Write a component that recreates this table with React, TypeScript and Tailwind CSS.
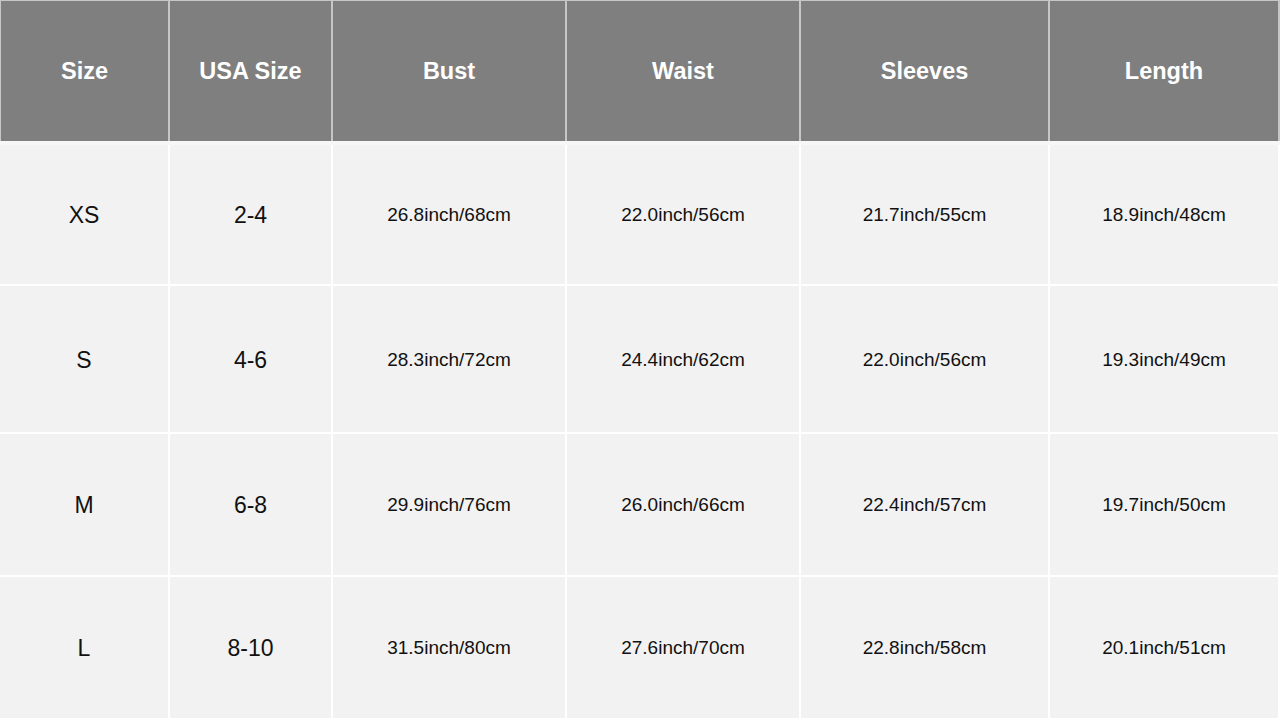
const columns = ["Size", "USA Size", "Bust", "Waist", "Sleeves", "Length"];

const rows = [
  ["XS", "2-4", "26.8inch/68cm", "22.0inch/56cm", "21.7inch/55cm", "18.9inch/48cm"],
  ["S", "4-6", "28.3inch/72cm", "24.4inch/62cm", "22.0inch/56cm", "19.3inch/49cm"],
  ["M", "6-8", "29.9inch/76cm", "26.0inch/66cm", "22.4inch/57cm", "19.7inch/50cm"],
  ["L", "8-10", "31.5inch/80cm", "27.6inch/70cm", "22.8inch/58cm", "20.1inch/51cm"],
];

export default function App() {
  return (
    <div className="w-[1280px] h-[720px] bg-white font-['Liberation_Sans',Arial,sans-serif] overflow-hidden">
      {/* header */}
      <div className="grid grid-cols-[167px_161px_232px_232px_247px_228px] gap-x-[2px] h-[141px] bg-[#c6c6c6] pl-[1px] pt-[1px] pr-[2px]">
        {columns.map((c) => (
          <div key={c} className="bg-[#7f7f7f] flex items-center justify-center pt-[2px] text-white font-bold text-[23.5px]">
            {c}
          </div>
        ))}
      </div>
      <div className="h-[4px] bg-[#f7f7f7]" />

      {/* body */}
      <div className="grid grid-cols-[168px_161px_232px_232px_247px_228px] grid-rows-[139px_146px_141px_141px] gap-[2px] pr-[2px]">
        {rows.map((r) =>
          r.map((cell, i) => (
            <div
              key={r[0] + i}
              className={`bg-[#f2f2f2] flex items-center justify-center pt-[2px] text-[#111] ${
                i < 2 ? "text-[23px]" : "text-[19px]"
              }`}
            >
              {cell}
            </div>
          ))
        )}
      </div>
    </div>
  );
}
